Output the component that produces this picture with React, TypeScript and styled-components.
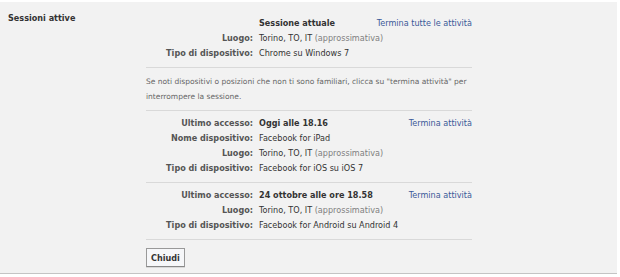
import styled, { createGlobalStyle } from "styled-components";

const GlobalStyle = createGlobalStyle`
  html, body {
    margin: 0;
    padding: 0;
    background: #ffffff;
  }
  body {
    font-family: "DejaVu Sans", Tahoma, Verdana, sans-serif;
    font-size: 8.1px;
    color: #333333;
  }
`;

type Row = { label: string; value: string; strong?: boolean; approx?: boolean };
type Session = { rows: Row[]; action: string };

const current: Session = {
  action: "Termina tutte le attività",
  rows: [
    { label: "", value: "Sessione attuale", strong: true },
    { label: "Luogo:", value: "Torino, TO, IT", approx: true },
    { label: "Tipo di dispositivo:", value: "Chrome su Windows 7" },
  ],
};

const others: Session[] = [
  {
    action: "Termina attività",
    rows: [
      { label: "Ultimo accesso:", value: "Oggi alle 18.16", strong: true },
      { label: "Nome dispositivo:", value: "Facebook for iPad" },
      { label: "Luogo:", value: "Torino, TO, IT", approx: true },
      { label: "Tipo di dispositivo:", value: "Facebook for iOS su iOS 7" },
    ],
  },
  {
    action: "Termina attività",
    rows: [
      { label: "Ultimo accesso:", value: "24 ottobre alle ore 18.58", strong: true },
      { label: "Luogo:", value: "Torino, TO, IT", approx: true },
      { label: "Tipo di dispositivo:", value: "Facebook for Android su Android 4" },
    ],
  },
];

const SessionBlock = ({ session }: { session: Session }) => (
  <Block>
    {session.rows.map((r, i) => (
      <Line key={i}>
        <Label>{r.label}</Label>
        <Value $strong={r.strong}>
          {r.value}
          {r.approx && <Approx> (approssimativa)</Approx>}
        </Value>
        <Action>{i === 0 ? <a href="#">{session.action}</a> : null}</Action>
      </Line>
    ))}
  </Block>
);

const App = () => {
  return (
    <>
      <GlobalStyle />
      <Panel>
        <Title>Sessioni attive</Title>
        <Content>
          <SessionBlock session={current} />
          <Note>
            Se noti dispositivi o posizioni che non ti sono familiari, clicca su
            "termina attività" per interrompere la sessione.
          </Note>
          {others.map((s, i) => (
            <SessionBlock key={i} session={s} />
          ))}
          <Footer>
            <CloseButton>Chiudi</CloseButton>
          </Footer>
        </Content>
      </Panel>
    </>
  );
};

export default App;

const Panel = styled.div`
  display: flex;
  width: 617px;
  height: 272px;
  margin-top: 2px;
  background: #f2f2f2;
  border-bottom: 1px solid #c4c4c4;
  box-sizing: border-box;
`;

const Title = styled.div`
  width: 138px;
  padding: 11px 0 0 8px;
  font-weight: bold;
  color: #333333;
`;

const Content = styled.div`
  width: 326px;
  padding-top: 14px;
`;

const Block = styled.div`
  padding: 5px 0 6px;
  border-bottom: 1px solid #d9d9d9;
  &:first-child {
    padding-top: 0;
  }
`;

const Line = styled.div`
  display: grid;
  grid-template-columns: 107px 1fr auto;
  column-gap: 6px;
  line-height: 15px;
  white-space: nowrap;
`;

const Label = styled.div`
  text-align: right;
  font-weight: bold;
  color: #555555;
`;

const Value = styled.div<{ $strong?: boolean }>`
  font-weight: ${(p) => (p.$strong ? "bold" : "normal")};
  color: #333333;
`;

const Approx = styled.span`
  color: #808080;
`;

const Action = styled.div`
  text-align: right;
  a {
    color: #3b5998;
    text-decoration: none;
  }
`;

const Note = styled.p`
  margin: 0;
  padding: 6px 0 6px;
  font-size: 7.5px;
  line-height: 15px;
  color: #666666;
  border-bottom: 1px solid #d9d9d9;
`;

const Footer = styled.div`
  padding-top: 8px;
`;

const CloseButton = styled.button`
  font-family: inherit;
  font-size: 8.1px;
  font-weight: bold;
  color: #333333;
  height: 19px;
  padding: 0 4px;
  background: #f6f7f9;
  border: 1px solid #999999;
  border-bottom-color: #888888;
  box-shadow: 0 1px 0 rgba(0, 0, 0, 0.1);
  cursor: pointer;
`;
